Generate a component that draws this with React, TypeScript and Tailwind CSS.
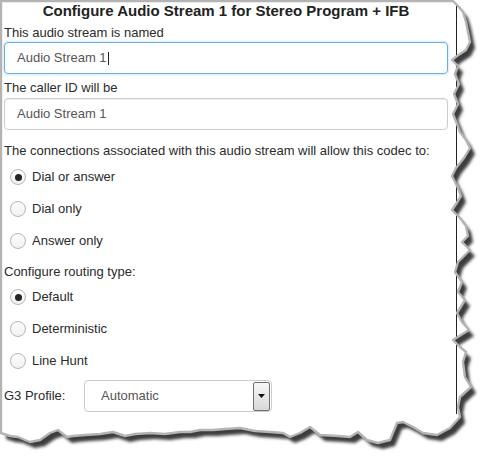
import React from "react";

// torn page outline, clockwise from the top-left corner
const edge = [
  [1, 1], [453, 1], [458, 6], [463, 12], [466, 22], [468, 32], [470, 42], [466, 50], [457, 56], [452, 60],
  [458, 66], [455, 74], [459, 84], [454, 94], [458, 104], [453, 114], [457, 124], [460, 132], [466, 140],
  [470, 148], [464, 158], [456, 168], [452, 176], [458, 188], [461, 196], [456, 204], [452, 210], [460, 218],
  [466, 226], [468, 236], [462, 242], [470, 250], [458, 262], [455, 272], [462, 282], [458, 292], [465, 300],
  [457, 313], [462, 322], [469, 330], [453, 340], [460, 347], [466, 352], [463, 362], [465, 377], [471, 387],
  [460, 397], [458, 407], [460, 417], [450, 428], [437, 435], [423, 433], [413, 427], [403, 422], [397, 423],
  [390, 440], [378, 443], [367, 440], [358, 432], [350, 437], [338, 436], [320, 435], [310, 427], [300, 433],
  [290, 437], [283, 433], [270, 432], [255, 431], [240, 428], [225, 429], [213, 430], [200, 430], [190, 432],
  [180, 432], [165, 434], [150, 433], [135, 434], [125, 436], [113, 432], [100, 434], [85, 435], [73, 436],
  [67, 437], [58, 430], [50, 433], [40, 440], [30, 442], [25, 440], [18, 437], [10, 436], [4, 434], [1, 433],
];

const points = edge.map(([x, y]) => `${x},${y}`).join(" ");

function TornPaper() {
  return (
    <svg className="absolute inset-0" width={498} height={469} viewBox="0 0 498 469">
      <defs>
        <filter id="blur" x="-10%" y="-10%" width="120%" height="120%">
          <feGaussianBlur stdDeviation="1.8" />
        </filter>
        <clipPath id="page">
          <polygon points={points} />
        </clipPath>
      </defs>
      <polygon points={points} transform="translate(5,6)" fill="#3c3c3c" filter="url(#blur)" />
      <polygon points={points} fill="#ffffff" />
      <line x1="456.5" y1="3" x2="456.5" y2="414" stroke="#222" strokeWidth="1" clipPath="url(#page)" />
      <polygon points={points} fill="none" stroke="#b4b4b4" strokeWidth="2.4" strokeLinejoin="round" />
    </svg>
  );
}

function Radio({ label, checked }: { label: string; checked?: boolean }) {
  return (
    <div className="flex items-center h-[32px]">
      <span className="ml-[6px] w-[16px] h-[16px] rounded-full border border-[#b4b4b4] bg-gradient-to-b from-white to-[#f0f0f0] flex items-center justify-center">
        {checked && <span className="w-[7px] h-[7px] rounded-full bg-[#262626]" />}
      </span>
      <span className="ml-[6px]">{label}</span>
    </div>
  );
}

export default function App() {
  return (
    <div className="relative w-[498px] h-[469px] bg-white overflow-hidden font-['Liberation_Sans',Arial,sans-serif]">
      <TornPaper />
      <div className="relative pl-[4px] pt-[2px] text-[13px] leading-[18px] text-[#2b2b2b]">
        <h1 className="w-[444px] h-[20px] text-center text-[15px] leading-[18px] font-bold text-[#222]">
          Configure Audio Stream 1 for Stereo Program + IFB
        </h1>

        <div className="mt-[2px]">This audio stream is named</div>
        <div className="w-[444px] h-[32px] px-[12px] flex items-center border border-[#66afe9] rounded-[4px] text-[#555] shadow-[0_0_3px_rgba(102,175,233,0.55)]">
          Audio Stream 1
          <span className="inline-block w-px h-[13px] bg-[#222] ml-[1px]" />
        </div>

        <div className="mt-[5px]">The caller ID will be</div>
        <div className="mt-[1px] w-[444px] h-[32px] px-[12px] flex items-center border border-[#cccccc] rounded-[4px] text-[#555] shadow-[inset_0_1px_1px_rgba(0,0,0,0.075)]">
          Audio Stream 1
        </div>

        <div className="mt-[12px]">The connections associated with this audio stream will allow this codec to:</div>
        <div className="mt-[1px]">
          <Radio label="Dial or answer" checked />
          <Radio label="Dial only" />
          <Radio label="Answer only" />
        </div>

        <div className="mt-[6px]">Configure routing type:</div>
        <div>
          <Radio label="Default" checked />
          <Radio label="Deterministic" />
          <Radio label="Line Hunt" />
        </div>

        <div className="mt-[3px] flex items-center h-[32px]">
          <span className="w-[80px]">G3 Profile:</span>
          <div className="w-[188px] h-[32px] flex items-center border border-[#cccccc] rounded-[4px] pl-[16px] pr-[1px] text-[#555]">
            <span className="flex-1">Automatic</span>
            <span className="w-[17px] h-[29px] flex items-center justify-center border border-[#707070] rounded-[2px] bg-gradient-to-b from-[#f8f8f8] to-[#d8d8d8]">
              <svg width="7" height="4" viewBox="0 0 7 4">
                <polygon points="0,0 7,0 3.5,4" fill="#111" />
              </svg>
            </span>
          </div>
        </div>
      </div>
    </div>
  );
}
